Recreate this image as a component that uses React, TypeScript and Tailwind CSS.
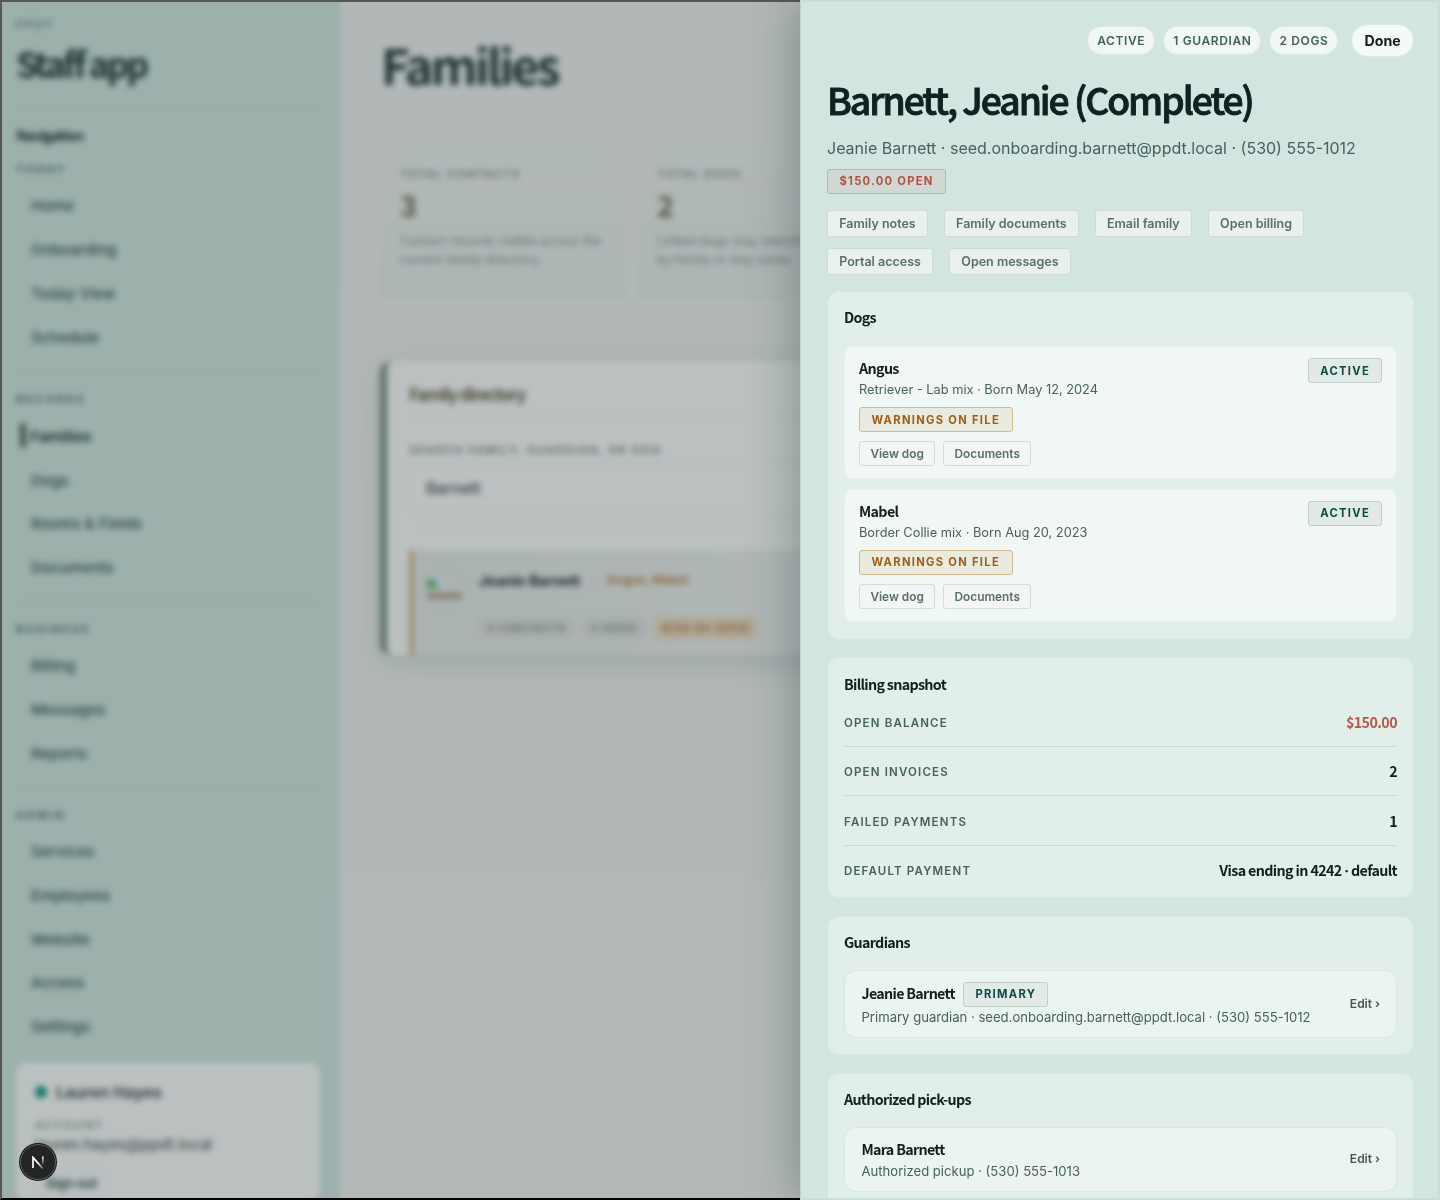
import type { ReactNode } from "react";

const NAV = [
  { label: "TODAY", items: ["Home", "Onboarding", "Today View", "Schedule"] },
  { label: "RECORDS", items: ["Families", "Dogs", "Rooms & Fields", "Documents"] },
  { label: "BUSINESS", items: ["Billing", "Messages", "Reports"] },
  { label: "ADMIN", items: ["Services", "Employees", "Website", "Access", "Settings"] },
];

const DOGS = [
  { name: "Angus", meta: "Retriever - Lab mix · Born May 12, 2024" },
  { name: "Mabel", meta: "Border Collie mix · Born Aug 20, 2023" },
];

const BILLING: { label: string; value: ReactNode; alert?: boolean }[] = [
  { label: "OPEN BALANCE", value: "$150.00", alert: true },
  { label: "OPEN INVOICES", value: "2" },
  { label: "FAILED PAYMENTS", value: "1" },
  {
    label: "DEFAULT PAYMENT",
    value: (
      <>
        Visa ending in 4242 <span className="font-[Inter,sans-serif]">·</span> default
      </>
    ),
  },
];

function Sidebar() {
  return (
    <aside className="flex w-[340px] shrink-0 flex-col bg-[#9cb0ac] pl-4 pr-[19px]">
      <div className="mt-[17px] h-4 text-[11.2px] leading-4 font-semibold tracking-[2.3px] text-[#546e69]">PPDT</div>
      <div className="mt-[7px] h-[46px] font-['Noto_Sans_CJK_SC',sans-serif] text-[35px] leading-[46px] font-bold tracking-[-2.75px] text-[#1f3433]">
        Staff app
      </div>
      <div className="mt-[23px] h-px bg-[#91a6a1]" />
      <div className="mt-[15px] h-5 font-['Noto_Sans_CJK_SC',sans-serif] text-[14.3px] leading-5 font-bold tracking-[-1px] text-[#1c302f]">
        Navigation
      </div>
      {NAV.map((section, index) => (
        <div key={section.label} className={index === 0 ? "mt-[17.3px] pb-[13px]" : "border-t border-[#8fa69d] pt-5 pb-3"}>
          <div className="h-3.5 text-[11px] leading-[14px] font-semibold tracking-[2.4px] text-[#3f5753]">{section.label}</div>
          <div className="mt-[7.3px]">
            {section.items.map((item) => (
              <div
                key={item}
                className={
                  item === "Families"
                    ? "flex h-[43.8px] items-center gap-[5px] pt-[3px] pl-[3.5px] text-[15.2px] font-semibold text-[#1b302f]"
                    : "flex h-[43.8px] items-center pt-[3px] pl-[15px] text-[15.2px] font-medium text-[#2e4744]"
                }
              >
                {item === "Families" && <span className="-mt-[3px] h-[25px] w-[6px] rounded-sm bg-[#3f5846]" />}
                {item}
              </div>
            ))}
          </div>
        </div>
      ))}
      <div className="mt-[3.5px] h-[200px] w-[304px] rounded-[10px] bg-[#bbc1c1] px-[19px] pt-[16.5px]">
        <div className="flex h-6 items-center gap-[9px] text-[16px] font-semibold text-[#263b39]">
          <span className="h-3 w-3 rounded-full bg-[#0b7562]" />
          Lauren Hayes
        </div>
        <div className="mt-[13px] h-4 text-[11px] leading-4 tracking-[1.9px] text-[#455a56]">ACCOUNT</div>
        <div className="mt-[2px] h-5 text-[15.2px] leading-5 text-[#2f413f]">lauren.hayes@ppdt.local</div>
        <div className="mt-[15px] flex h-[28px] w-[73px] items-center justify-center rounded-md border border-[#abb3b2] text-[13px] font-semibold text-[#263b39]">
          Sign out
        </div>
      </div>
    </aside>
  );
}

function StatCard({ label, value, note }: { label: string; value: string; note: ReactNode }) {
  return (
    <div className="h-[147px] w-[246px] shrink-0 border border-[#a5aeac] bg-linear-to-b from-[#b2b8b8] to-[#adb6b5] px-[19px] pt-[13px]">
      <div className="mt-px h-4 text-[11px] leading-4 font-semibold tracking-[1.48px] text-[#62726f]">{label}</div>
      <div className="mt-[4px] h-9 font-['Noto_Sans_CJK_SC',sans-serif] text-[29px] leading-9 font-bold text-[#5a594a]">{value}</div>
      <div className="mt-[9px] text-[12.5px] leading-[19.3px] whitespace-nowrap text-[#657573]">{note}</div>
    </div>
  );
}

function FamiliesPage() {
  return (
    <main className="w-[1100px] bg-linear-to-b from-[#b2b8b8] to-[#b3b9b9] pl-[40px]">
      <h1 className="mt-[33px] h-[62px] pl-px font-['Noto_Sans_CJK_SC',sans-serif] text-[49px] leading-[62px] font-bold tracking-[-3px] text-[#1f3433]">
        Families
      </h1>
      <div className="mt-[56px] flex gap-[11px] pb-[14px]">
        <StatCard
          label="TOTAL CONTACTS"
          value="3"
          note={
            <>
              Contact records visible across the
              <br />
              current family directory.
            </>
          }
        />
        <StatCard
          label="TOTAL DOGS"
          value="2"
          note={
            <>
              Linked dogs stay searchable
              <br />
              by family or dog name.
            </>
          }
        />
      </div>
      <div className="h-px bg-[#aab2b1]" />
      <section className="mt-[48px] h-[294px] overflow-hidden rounded-[12px] border-l-[7px] border-[#5f7165] bg-[#bbc1c1] pl-[22px] shadow-[0_8px_28px_rgba(70,90,85,0.22)]">
        <h2 className="mt-[20.5px] h-6 font-['Noto_Sans_CJK_SC',sans-serif] text-[16.5px] leading-6 font-bold tracking-[-1.05px] text-[#504d3b]">
          Family directory
        </h2>
        <div className="mt-[10.5px] h-px bg-[#b1b8b7]" />
        <div className="mt-[25px] h-4 text-[11px] leading-4 font-medium tracking-[1.68px] text-[#465b56]">SEARCH FAMILY, GUARDIAN, OR DOG</div>
        <div className="mt-[5px] flex h-[50px] items-center border border-[#aab2b1] pl-[16px] text-[16px] text-[#1f3331]">Barnett</div>
        <div className="mt-[14px] h-px bg-[#b5bbbb]" />
        <div className="mt-[22px] flex h-[120px] border-l-[5px] border-[#a28c70] bg-linear-to-r from-[#abb3b2] to-[#b7bdbd] pt-[17px]">
          <div className="ml-[10px] flex h-[42px] w-[42px] shrink-0 flex-col overflow-hidden rounded-full border border-[#a0a391] pt-[5px] pl-px">
            <svg viewBox="0 0 16 16" className="h-4 w-4 shrink-0">
              <path d="M1 1h9l5 5v9H1z" fill="#9fb6c6" />
              <path d="M1 15V8l4-3 9 10z" fill="#4f8f55" />
            </svg>
            <div className="h-3 text-[11px] leading-3 font-bold text-[#6d5a3c]">Jeanie</div>
          </div>
          <div className="ml-[13px] pt-[1.5px]">
            <div className="flex h-6 items-center whitespace-nowrap">
              <span className="text-[14.3px] font-bold text-[#162b2b]">Jeanie Barnett</span>
              <span className="ml-[12px] text-[12px] font-bold text-[#8c6b40]">·</span>
              <span className="ml-[11px] text-[12.2px] font-semibold text-[#8d6236]">Angus, Mabel</span>
            </div>
            <div className="-ml-px mt-[24px] flex gap-[8px] text-[11px] leading-[22px] whitespace-nowrap">
              <span className="rounded bg-[#a7aead] px-[8.5px] font-medium tracking-[0.85px] text-[#5b6866]">3 CONTACTS</span>
              <span className="rounded bg-[#a7aead] px-[8.5px] font-medium tracking-[0.85px] text-[#5b6866]">2 DOGS</span>
              <span className="rounded bg-[#b0a897] px-[8px] font-semibold tracking-[0.9px] text-[#8a5e30]">$150.00 OPEN</span>
            </div>
          </div>
        </div>
      </section>
    </main>
  );
}

function CountPill({ children }: { children: ReactNode }) {
  return (
    <span className="flex h-[29px] items-center rounded-full border border-[#dde9e5] bg-[#f0f7f5] pr-[8.7px] pl-[9.2px] text-[12px] font-semibold tracking-[0.6px] text-[#43605a]">
      {children}
    </span>
  );
}

function ActionButton({ children }: { children: ReactNode }) {
  return (
    <button className="flex h-[27px] items-center rounded-[3px] border border-[#cfdad7] bg-[#eaf0ee] px-[11.2px] pt-px text-[12.5px] font-semibold text-[#58706a]">
      {children}
    </button>
  );
}

function SmallButton({ children }: { children: ReactNode }) {
  return (
    <button className="flex h-[25px] items-center rounded-[3px] border border-[#d3dcda] bg-[#f4f6f6] px-[10.4px] pt-[2px] text-[11.84px] font-semibold text-[#58706a]">
      {children}
    </button>
  );
}

function GreenBadge({ children }: { children: ReactNode }) {
  return (
    <span className="flex h-[25px] items-center rounded-[3px] border border-[#c1cfcb] bg-[#e2e9e6] pr-[11px] pl-[11.5px] text-[11.2px] font-bold tracking-[1.3px] text-[#0b4a44]">
      {children}
    </span>
  );
}

function SectionTitle({ children }: { children: ReactNode }) {
  return (
    <h2 className="h-5 font-['Noto_Sans_CJK_SC',sans-serif] text-[14.3px] leading-5 font-bold tracking-[-0.69px] text-[#10201e]">{children}</h2>
  );
}

function PersonCard({ name, meta, primary }: { name: string; meta: string; primary?: boolean }) {
  return (
    <div
      className={
        primary
          ? "mt-[17.5px] flex h-[68.5px] items-center justify-between rounded-[12px] border border-[#dbe7e3] bg-[#ebf4f1] pt-px pr-[16px] pl-[16.5px]"
          : "mt-[17.5px] flex h-[65px] items-center justify-between rounded-[12px] border border-[#dbe7e3] bg-[#ebf4f1] pt-px pr-[16px] pl-[16.5px]"
      }
    >
      <div>
        <div className={primary ? "flex h-[25px] items-center gap-2" : "flex h-[23px] items-center gap-2"}>
          <span className="h-[22px] font-['Noto_Sans_CJK_SC',sans-serif] text-[14.3px] leading-5 font-bold tracking-[-0.7px] text-[#10201e]">{name}</span>
          {primary && <GreenBadge>PRIMARY</GreenBadge>}
        </div>
        <div className="h-5 text-[13.1px] leading-5 text-[#47625d]">{meta}</div>
      </div>
      <span className="pb-px text-[12px] font-semibold text-[#43584a]">Edit ›</span>
    </div>
  );
}

function FamilyDrawer() {
  return (
    <section className="absolute inset-y-0 right-0 flex w-[640px] flex-col gap-[17.6px] overflow-hidden border-l border-[#bfd2cc] bg-[#d2e5e0] px-[26px] shadow-[0_0_48px_rgba(30,50,46,0.38)]">
      <header className="-mb-[1.3px]">
        <div className="mt-[24px] flex h-[33px] items-center justify-end gap-[8.3px]">
          <CountPill>ACTIVE</CountPill>
          <CountPill>1 GUARDIAN</CountPill>
          <CountPill>2 DOGS</CountPill>
          <button className="ml-[5px] flex h-[33px] items-center rounded-full border border-[#dde9e5] bg-[#f5faf8] px-[12.2px] text-[14.2px] font-bold text-[#0e1c1a]">
            Done
          </button>
        </div>
        <h1 className="mt-4 h-[52px] font-['Noto_Sans_CJK_SC',sans-serif] text-[37.3px] leading-[52px] font-medium tracking-[-2.05px] whitespace-nowrap text-[#10211f] [-webkit-text-stroke:0.9px_#10211f]">
          Barnett, Jeanie (Complete)
        </h1>
        <p className="mt-[10.5px] h-6 text-[16px] leading-6 text-[#47625d]">Jeanie Barnett · seed.onboarding.barnett@ppdt.local · (530) 555-1012</p>
        <div className="mt-[9.5px] flex">
          <span className="flex h-[25px] items-center rounded-[3px] border border-[#c9aea7] bg-[#cfd8d2] pr-[11.5px] pl-[11.5px] text-[11.2px] font-bold tracking-[1.27px] text-[#b5503f]">
            $150.00 OPEN
          </span>
        </div>
        <div className="mt-4 flex flex-wrap gap-x-4 gap-y-[11px]">
          <ActionButton>Family notes</ActionButton>
          <ActionButton>Family documents</ActionButton>
          <ActionButton>Email family</ActionButton>
          <ActionButton>Open billing</ActionButton>
          <ActionButton>Portal access</ActionButton>
          <ActionButton>Open messages</ActionButton>
        </div>
      </header>

      <div className="h-[348.5px] shrink-0 rounded-[12px] border border-[#d8e7e3] bg-[#e1eeea] pt-[15.2px] pr-4 pl-4">
        <SectionTitle>Dogs</SectionTitle>
        <div className="mt-[19px] flex flex-col gap-[9.5px]">
          {DOGS.map((dog) => (
            <article key={dog.name} className="flex h-[133px] items-start justify-between rounded-[8px] border border-[#e8f1ee] bg-[#f0f7f5] pt-[11px] pr-[14px] pl-[14px]">
              <div>
                <div className="h-[22px] font-['Noto_Sans_CJK_SC',sans-serif] text-[14.3px] leading-5 font-bold tracking-[-0.65px] text-[#10201e]">
                  {dog.name}
                </div>
                <div className="h-5 text-[12.8px] leading-5 text-[#47625d]">{dog.meta}</div>
                <div className="mt-[7px] flex">
                  <span className="flex h-[25px] items-center rounded-[3px] border border-[#d3b98c] bg-[#eaebdf] pr-[11.5px] pl-[11.5px] text-[11.2px] font-bold tracking-[1.3px] text-[#a35c12]">
                    WARNINGS ON FILE
                  </span>
                </div>
                <div className="mt-[9px] flex gap-2">
                  <SmallButton>View dog</SmallButton>
                  <SmallButton>Documents</SmallButton>
                </div>
              </div>
              <GreenBadge>ACTIVE</GreenBadge>
            </article>
          ))}
        </div>
      </div>

      <div className="h-[240.6px] shrink-0 rounded-[12px] border border-[#d8e7e3] bg-[#e1eeea] px-4 pt-[15.5px]">
        <SectionTitle>Billing snapshot</SectionTitle>
        <div className="mt-[3.8px] divide-y divide-[#cbdad6]">
          {BILLING.map((row) => (
            <div key={row.label} className="flex h-[49.4px] items-center justify-between">
              <span className="pt-[3px] text-[11.5px] font-semibold tracking-[1.17px] text-[#47625d]">{row.label}</span>
              <span
                className={
                  row.alert
                    ? "font-['Noto_Sans_CJK_SC',sans-serif] text-[14.3px] leading-5 font-bold tracking-[-0.6px] text-[#b8584a]"
                    : "font-['Noto_Sans_CJK_SC',sans-serif] text-[14.3px] leading-5 font-bold tracking-[-0.64px] text-[#10201e]"
                }
              >
                {row.value}
              </span>
            </div>
          ))}
        </div>
      </div>

      <div className="h-[139.5px] shrink-0 rounded-[12px] border border-[#d8e7e3] bg-[#e1eeea] px-4 pt-[15.5px]">
        <SectionTitle>Guardians</SectionTitle>
        <PersonCard name="Jeanie Barnett" meta="Primary guardian · seed.onboarding.barnett@ppdt.local · (530) 555-1012" primary />
      </div>

      <div className="h-[200px] shrink-0 rounded-[12px] border border-[#d8e7e3] bg-[#e1eeea] px-4 pt-[15.5px]">
        <SectionTitle>Authorized pick-ups</SectionTitle>
        <PersonCard name="Mara Barnett" meta="Authorized pickup · (530) 555-1013" />
      </div>
    </section>
  );
}

export default function App() {
  return (
    <div className="relative h-[1200px] w-[1440px] overflow-hidden font-[Inter,sans-serif]">
      <div className="flex h-[1200px] overflow-hidden">
        <Sidebar />
        <FamiliesPage />
      </div>
      <div className="absolute inset-0 backdrop-blur-[3px]" />
      <div className="absolute inset-0 border-2 border-[#575757] border-b-black" />
      <FamilyDrawer />
      <div className="pointer-events-none absolute inset-y-0 right-0 w-[640px] border-y-2 border-r-2 border-[#c9ddd8]" />
      <div className="absolute bottom-[20px] left-[20px] flex h-[36px] w-[36px] items-center justify-center rounded-full border border-[#5c5f5e] bg-[#222523] shadow-[0_0_0_1px_#171717]">
        <svg viewBox="0 0 12 13" className="mt-px h-[13px] w-[12px]" fill="none">
          <defs>
            <linearGradient id="stem" x1="0" y1="0" x2="0" y2="1">
              <stop offset="0" stopColor="#fff" />
              <stop offset="1" stopColor="#fff" stopOpacity="0" />
            </linearGradient>
            <linearGradient id="slash" gradientUnits="userSpaceOnUse" x1="6" y1="7" x2="11" y2="13">
              <stop offset="0" stopColor="#fff" />
              <stop offset="1" stopColor="#fff" stopOpacity="0.2" />
            </linearGradient>
          </defs>
          <path d="M1 12V1.4L11 12.8" stroke="url(#slash)" strokeWidth="1.7" />
          <rect x="10" y="0.5" width="1.6" height="9" fill="url(#stem)" />
        </svg>
      </div>
    </div>
  );
}
